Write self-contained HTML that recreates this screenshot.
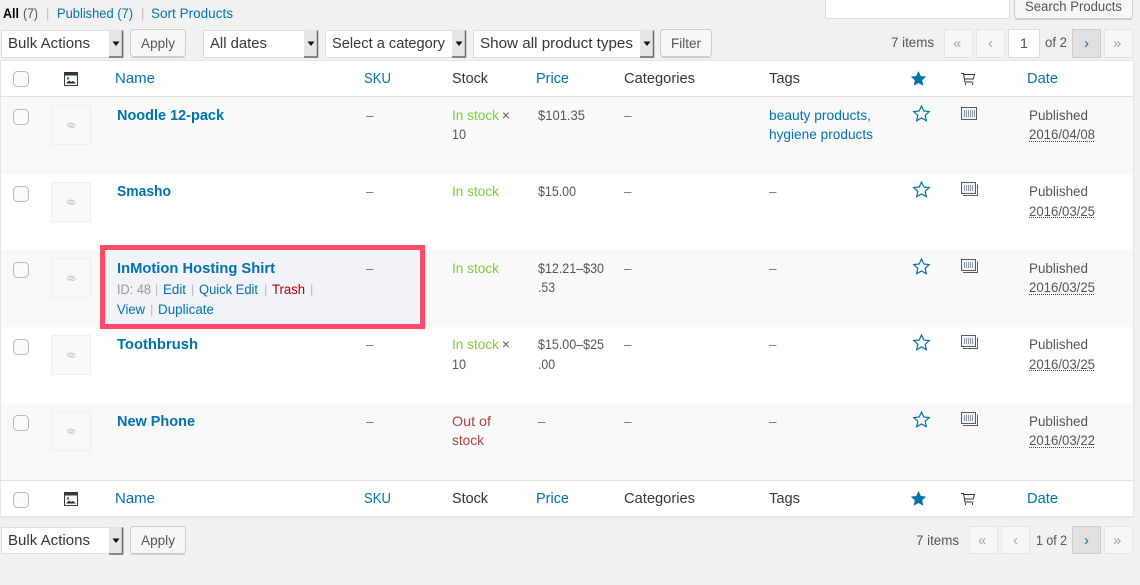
<!DOCTYPE html>
<html lang="en">
<head>
<meta charset="utf-8">
<title>Products</title>
<style>
html,body{margin:0;padding:0;background:#f1f1f1;width:1140px;height:585px;overflow:hidden}
svg{display:block;position:absolute;left:0;top:0}
text{font-family:"Liberation Sans",sans-serif;font-size:14px;fill:#555;white-space:pre}
.l{fill:#0073aa}
.h{fill:#32373c;font-size:14.5px}
.hl{fill:#0073aa;font-size:14.5px}
.n{fill:#0073aa;font-weight:bold;font-size:14.5px}
.d{fill:#32373c;font-size:14.5px}
.b{fill:#555;font-size:13.5px}
.g{fill:#7ad03a}
.r{fill:#a44}
.s{fill:#bbb}
.m{fill:#999}
.t{fill:#a00}
.pg{fill:#a0a5aa;font-size:15px}
</style>
</head>
<body>
<svg width="1140" height="585" viewBox="0 0 1140 585" xmlns="http://www.w3.org/2000/svg">
<defs>
<g id="cb"><rect x="13.500" y="0.500" width="15" height="15" rx="4" fill="#fbfbfb" stroke="#b4b9be"/></g>
<g id="th"><rect x="51.500" y="0.500" width="39" height="39" fill="#f9f9f9" stroke="#efefef"/><ellipse cx="70" cy="20" rx="2.500" ry="2" fill="none" stroke="#c8c8c8"/><ellipse cx="72.500" cy="20.500" rx="2.500" ry="2" fill="none" stroke="#c8c8c8"/></g>
<g id="imgi"><rect x="64.500" y="72.500" width="13" height="13" fill="#fff" stroke="#3a3a4a"/><rect x="64" y="72" width="14" height="3.500" fill="#32373c"/><path d="M66 83.500l3-3 2 1.500 2-1 3 2.500z" fill="#23282d"/><circle cx="68" cy="78.500" r="1.200" fill="#0073aa"/></g>
<path id="st" d="M7.500 0l2.300 5 5.400.6-4 3.700 1.100 5.400-4.800-2.700-4.800 2.700 1.100-5.400-4-3.700 5.400-.6z"/>
<g id="cart" fill="none" stroke="#32373c" stroke-width="1"><path d="M961 73.500h2.500l1.500 8.500h8.500"/><path d="M963.800 74.500h10.700l-1.200 4.500h-8.700"/><path d="M965.500 83v2M972.500 83v2"/></g>
<g id="bar"><rect x="961.500" y="107.500" width="15" height="12" fill="#f3f3f3" stroke="#555d66"/><path d="M964.500 110v7M966.500 110v7M968.500 110v7M970.500 110v7M972.500 110v7M974.500 110v7" stroke="#8a97a5" stroke-width="1"/></g>
<g id="bars"><path d="M963 195.500h14.500v-11" fill="none" stroke="#555d66"/><rect x="961.500" y="182.500" width="14" height="11" fill="#f3f3f3" stroke="#555d66"/><path d="M964.500 185v6M966.500 185v6M968.500 185v6M970.500 185v6M972.500 185v6" stroke="#8a97a5" stroke-width="1"/></g>
<g id="arrow"><rect x="0" y="0" width="14" height="26" fill="#e6e6e6"/><path d="M13.500 0v26.500H0" fill="none" stroke="#6b6b6b" stroke-width="1.500"/><path d="M3.500 11h7l-3.500 4.500z" fill="#111"/></g>
</defs>

<!-- top filters -->
<text x="3" y="18" style="fill:#000;font-size:13.5px;font-weight:bold" textLength="16" lengthAdjust="spacingAndGlyphs">All</text>
<text x="23" y="18" class="b" textLength="15" lengthAdjust="spacingAndGlyphs">(7)</text>
<text x="46" y="18" class="s" style="font-size:13px">|</text>
<text x="57" y="18" class="l" style="font-size:13.500px" textLength="76" lengthAdjust="spacingAndGlyphs">Published (7)</text>
<text x="141" y="18" class="s" style="font-size:13px">|</text>
<text x="151" y="18" class="l" style="font-size:13.500px" textLength="82" lengthAdjust="spacingAndGlyphs">Sort Products</text>

<!-- search -->
<rect x="825.500" y="-3.500" width="184" height="22" fill="#fff" stroke="#ddd"/>
<rect x="1014.500" y="-5.500" width="118" height="24" rx="3" fill="#f7f7f7" stroke="#ccc"/>
<path d="M1015 19.500h117" stroke="#ccc"/>
<text x="1025" y="11" class="b" textLength="97" lengthAdjust="spacingAndGlyphs">Search Products</text>

<!-- top selects -->
<rect x="1.500" y="30.500" width="122" height="27" fill="#fff" stroke="#ddd"/>
<use href="#arrow" x="109" y="30.500"/>
<text x="8" y="48" class="d" textLength="82" lengthAdjust="spacingAndGlyphs">Bulk Actions</text>
<rect x="130.500" y="29.500" width="55" height="27" rx="3" fill="#f7f7f7" stroke="#ccc"/>
<path d="M131 57.500h54" stroke="#ccc"/>
<text x="141" y="48" class="b" textLength="34" lengthAdjust="spacingAndGlyphs">Apply</text>

<rect x="203.500" y="30.500" width="114" height="27" fill="#fff" stroke="#ddd"/>
<use href="#arrow" x="304" y="30.500"/>
<text x="210" y="48" class="d" textLength="57" lengthAdjust="spacingAndGlyphs">All dates</text>

<rect x="325.500" y="30.500" width="140" height="27" fill="#fff" stroke="#ddd"/>
<use href="#arrow" x="452" y="30.500"/>
<text x="332" y="48" class="d" textLength="113" lengthAdjust="spacingAndGlyphs">Select a category</text>

<rect x="473.500" y="30.500" width="180" height="27" fill="#fff" stroke="#ddd"/>
<use href="#arrow" x="640" y="30.500"/>
<text x="480" y="48" class="d" textLength="153" lengthAdjust="spacingAndGlyphs">Show all product types</text>

<rect x="660.500" y="29.500" width="51" height="27" rx="3" fill="#f7f7f7" stroke="#ccc"/>
<path d="M661 57.500h50" stroke="#ccc"/>
<text x="671" y="48" class="b" textLength="30" lengthAdjust="spacingAndGlyphs">Filter</text>

<!-- top pager -->
<text x="891" y="47" class="b" textLength="43" lengthAdjust="spacingAndGlyphs">7 items</text>
<rect x="944.500" y="29.500" width="28" height="28" fill="#f7f7f7" stroke="#e5e5e5"/>
<text x="953" y="48" class="pg">«</text>
<rect x="976.500" y="29.500" width="28" height="28" fill="#f7f7f7" stroke="#e5e5e5"/>
<text x="988" y="48" class="pg">‹</text>
<rect x="1008.500" y="29.500" width="31" height="28" fill="#fff" stroke="#ddd"/>
<text x="1020" y="48" class="b" textLength="8" lengthAdjust="spacingAndGlyphs">1</text>
<text x="1045" y="47" class="b" textLength="22" lengthAdjust="spacingAndGlyphs">of 2</text>
<rect x="1072.500" y="29.500" width="28" height="28" fill="#e0e0e0" stroke="#ccc"/>
<text x="1084" y="48" class="l" style="font-size:15px">›</text>
<rect x="1104.500" y="29.500" width="28" height="28" fill="#f7f7f7" stroke="#e5e5e5"/>
<text x="1113" y="48" class="pg">»</text>

<!-- table -->
<rect x="0.500" y="60.500" width="1133" height="456" fill="#fff" stroke="#e5e5e5"/>
<rect x="1" y="97" width="1132" height="77" fill="#f9f9f9"/>
<rect x="1" y="250" width="1132" height="77" fill="#f9f9f9"/>
<rect x="1" y="403" width="1132" height="77" fill="#f9f9f9"/>
<path d="M1 96.500h1132M1 480.500h1132" stroke="#e1e1e1"/>
<path d="M1 517.500h1133" stroke="#e6e6e6"/>

<!-- header -->
<use href="#cb" y="71"/>
<use href="#imgi"/>
<text x="115" y="83" class="hl" textLength="40" lengthAdjust="spacingAndGlyphs">Name</text>
<text x="364" y="83" class="hl" textLength="27" lengthAdjust="spacingAndGlyphs">SKU</text>
<text x="452" y="83" class="h" textLength="36" lengthAdjust="spacingAndGlyphs">Stock</text>
<text x="536" y="83" class="hl" textLength="33" lengthAdjust="spacingAndGlyphs">Price</text>
<text x="624" y="83" class="h" textLength="71" lengthAdjust="spacingAndGlyphs">Categories</text>
<text x="769" y="83" class="h" textLength="31" lengthAdjust="spacingAndGlyphs">Tags</text>
<use href="#st" x="911" y="71" fill="#0073aa"/>
<use href="#cart"/>
<text x="1027" y="83" class="hl" textLength="31" lengthAdjust="spacingAndGlyphs">Date</text>

<!-- highlight -->
<rect x="102.500" y="247.500" width="320" height="79" fill="#f2f2f9" stroke="#ff4a68" stroke-width="5"/>

<!-- row 1 -->
<use href="#cb" y="109"/><use href="#th" y="105"/>
<text x="117" y="120" class="n" textLength="107" lengthAdjust="spacingAndGlyphs">Noodle 12-pack</text>
<text x="366" y="120" class="b" style="fill:#777">–</text>
<text x="452" y="120" class="g" textLength="47" lengthAdjust="spacingAndGlyphs">In stock</text>
<text x="502" y="120" class="b">×</text>
<text x="452" y="139" class="b" textLength="14" lengthAdjust="spacingAndGlyphs">10</text>
<text x="538" y="120" class="b" textLength="47" lengthAdjust="spacingAndGlyphs">$101.35</text>
<text x="624" y="120" class="b" style="fill:#777">–</text>
<text x="769" y="120" class="l" textLength="102" lengthAdjust="spacingAndGlyphs">beauty products,</text>
<text x="769" y="139" class="l" textLength="104" lengthAdjust="spacingAndGlyphs">hygiene products</text>
<use href="#st" x="914" y="106" fill="none" stroke="#0073aa" stroke-width="1.200"/>
<use href="#bar"/>
<text x="1029" y="120" class="b" textLength="59" lengthAdjust="spacingAndGlyphs">Published</text>
<text x="1029" y="139" class="b" textLength="66" lengthAdjust="spacingAndGlyphs">2016/04/08</text>
<path d="M1029 141.500h66" stroke="#444" stroke-dasharray="1 1"/>

<!-- row 2 -->
<use href="#cb" y="186"/><use href="#th" y="182"/>
<text x="117" y="196" class="n" textLength="54" lengthAdjust="spacingAndGlyphs">Smasho</text>
<text x="366" y="196" class="b" style="fill:#777">–</text>
<text x="452" y="196" class="g" textLength="47" lengthAdjust="spacingAndGlyphs">In stock</text>
<text x="538" y="196" class="b" textLength="38" lengthAdjust="spacingAndGlyphs">$15.00</text>
<text x="624" y="196" class="b" style="fill:#777">–</text>
<text x="769" y="196" class="b" style="fill:#777">–</text>
<use href="#st" x="914" y="182" fill="none" stroke="#0073aa" stroke-width="1.200"/>
<use href="#bars"/>
<text x="1029" y="196" class="b" textLength="59" lengthAdjust="spacingAndGlyphs">Published</text>
<text x="1029" y="216" class="b" textLength="66" lengthAdjust="spacingAndGlyphs">2016/03/25</text>
<path d="M1029 217.500h66" stroke="#444" stroke-dasharray="1 1"/>

<!-- row 3 -->
<use href="#cb" y="262"/><use href="#th" y="258"/>
<text x="117" y="273" class="n" textLength="158" lengthAdjust="spacingAndGlyphs">InMotion Hosting Shirt</text>
<text x="366" y="273" class="b" style="fill:#777">–</text>
<text x="117" y="294" class="m" style="font-size:13.500px" textLength="34" lengthAdjust="spacingAndGlyphs">ID: 48</text>
<text x="155" y="294" class="s" style="font-size:13px">|</text>
<text x="163" y="294" class="l" style="font-size:13.500px" textLength="23" lengthAdjust="spacingAndGlyphs">Edit</text>
<text x="191" y="294" class="s" style="font-size:13px">|</text>
<text x="199" y="294" class="l" style="font-size:13.500px" textLength="59" lengthAdjust="spacingAndGlyphs">Quick Edit</text>
<text x="264" y="294" class="s" style="font-size:13px">|</text>
<text x="272" y="294" class="t" style="font-size:13.500px" textLength="33" lengthAdjust="spacingAndGlyphs">Trash</text>
<text x="310" y="294" class="s" style="font-size:13px">|</text>
<text x="117" y="314" class="l" style="font-size:13.500px" textLength="28" lengthAdjust="spacingAndGlyphs">View</text>
<text x="150" y="314" class="s" style="font-size:13px">|</text>
<text x="158" y="314" class="l" style="font-size:13.500px" textLength="56" lengthAdjust="spacingAndGlyphs">Duplicate</text>
<text x="452" y="273" class="g" textLength="47" lengthAdjust="spacingAndGlyphs">In stock</text>
<text x="538" y="273" class="b" textLength="66" lengthAdjust="spacingAndGlyphs">$12.21–$30</text>
<text x="538" y="292" class="b" textLength="17" lengthAdjust="spacingAndGlyphs">.53</text>
<text x="624" y="273" class="b" style="fill:#777">–</text>
<text x="769" y="273" class="b" style="fill:#777">–</text>
<use href="#st" x="914" y="259" fill="none" stroke="#0073aa" stroke-width="1.200"/>
<use href="#bars" y="77"/>
<text x="1029" y="273" class="b" textLength="59" lengthAdjust="spacingAndGlyphs">Published</text>
<text x="1029" y="292" class="b" textLength="66" lengthAdjust="spacingAndGlyphs">2016/03/25</text>
<path d="M1029 294.500h66" stroke="#444" stroke-dasharray="1 1"/>

<!-- row 4 -->
<use href="#cb" y="339"/><use href="#th" y="335"/>
<text x="117" y="349" class="n" textLength="81" lengthAdjust="spacingAndGlyphs">Toothbrush</text>
<text x="366" y="349" class="b" style="fill:#777">–</text>
<text x="452" y="349" class="g" textLength="47" lengthAdjust="spacingAndGlyphs">In stock</text>
<text x="502" y="349" class="b">×</text>
<text x="452" y="369" class="b" textLength="14" lengthAdjust="spacingAndGlyphs">10</text>
<text x="538" y="349" class="b" textLength="66" lengthAdjust="spacingAndGlyphs">$15.00–$25</text>
<text x="538" y="369" class="b" textLength="17" lengthAdjust="spacingAndGlyphs">.00</text>
<text x="624" y="349" class="b" style="fill:#777">–</text>
<text x="769" y="349" class="b" style="fill:#777">–</text>
<use href="#st" x="914" y="335" fill="none" stroke="#0073aa" stroke-width="1.200"/>
<use href="#bars" y="153"/>
<text x="1029" y="349" class="b" textLength="59" lengthAdjust="spacingAndGlyphs">Published</text>
<text x="1029" y="369" class="b" textLength="66" lengthAdjust="spacingAndGlyphs">2016/03/25</text>
<path d="M1029 370.500h66" stroke="#444" stroke-dasharray="1 1"/>

<!-- row 5 -->
<use href="#cb" y="415"/><use href="#th" y="411"/>
<text x="117" y="426" class="n" textLength="78" lengthAdjust="spacingAndGlyphs">New Phone</text>
<text x="366" y="426" class="b" style="fill:#777">–</text>
<text x="452" y="426" class="r" textLength="39" lengthAdjust="spacingAndGlyphs">Out of</text>
<text x="452" y="445" class="r" textLength="32" lengthAdjust="spacingAndGlyphs">stock</text>
<text x="538" y="426" class="b" style="fill:#777">–</text>
<text x="624" y="426" class="b" style="fill:#777">–</text>
<text x="769" y="426" class="b" style="fill:#777">–</text>
<use href="#st" x="914" y="412" fill="none" stroke="#0073aa" stroke-width="1.200"/>
<use href="#bars" y="230"/>
<text x="1029" y="426" class="b" textLength="59" lengthAdjust="spacingAndGlyphs">Published</text>
<text x="1029" y="445" class="b" textLength="66" lengthAdjust="spacingAndGlyphs">2016/03/22</text>
<path d="M1029 447.500h66" stroke="#444" stroke-dasharray="1 1"/>

<!-- footer -->
<use href="#cb" y="492"/>
<use href="#imgi" y="420"/>
<text x="115" y="503" class="hl" textLength="40" lengthAdjust="spacingAndGlyphs">Name</text>
<text x="364" y="503" class="hl" textLength="27" lengthAdjust="spacingAndGlyphs">SKU</text>
<text x="452" y="503" class="h" textLength="36" lengthAdjust="spacingAndGlyphs">Stock</text>
<text x="536" y="503" class="hl" textLength="33" lengthAdjust="spacingAndGlyphs">Price</text>
<text x="624" y="503" class="h" textLength="71" lengthAdjust="spacingAndGlyphs">Categories</text>
<text x="769" y="503" class="h" textLength="31" lengthAdjust="spacingAndGlyphs">Tags</text>
<use href="#st" x="911" y="491" fill="#0073aa"/>
<use href="#cart" y="420"/>
<text x="1027" y="503" class="hl" textLength="31" lengthAdjust="spacingAndGlyphs">Date</text>

<!-- bottom nav -->
<rect x="1.500" y="527.500" width="122" height="26" fill="#fff" stroke="#ddd"/>
<use href="#arrow" x="109" y="527.500"/>
<text x="8" y="545" class="d" textLength="82" lengthAdjust="spacingAndGlyphs">Bulk Actions</text>
<rect x="130.500" y="526.500" width="55" height="27" rx="3" fill="#f7f7f7" stroke="#ccc"/>
<path d="M131 554.500h54" stroke="#ccc"/>
<text x="141" y="545" class="b" textLength="34" lengthAdjust="spacingAndGlyphs">Apply</text>

<text x="916" y="545" class="b" textLength="43" lengthAdjust="spacingAndGlyphs">7 items</text>
<rect x="969.500" y="526.500" width="28" height="27" fill="#f7f7f7" stroke="#e5e5e5"/>
<text x="978" y="545" class="pg">«</text>
<rect x="1001.500" y="526.500" width="28" height="27" fill="#f7f7f7" stroke="#e5e5e5"/>
<text x="1013" y="545" class="pg">‹</text>
<text x="1036" y="545" class="b" textLength="31" lengthAdjust="spacingAndGlyphs">1 of 2</text>
<rect x="1072.500" y="526.500" width="28" height="27" fill="#e0e0e0" stroke="#ccc"/>
<text x="1084" y="545" class="l" style="font-size:15px">›</text>
<rect x="1104.500" y="526.500" width="28" height="27" fill="#f7f7f7" stroke="#e5e5e5"/>
<text x="1113" y="545" class="pg">»</text>
</svg>
</body>
</html>
